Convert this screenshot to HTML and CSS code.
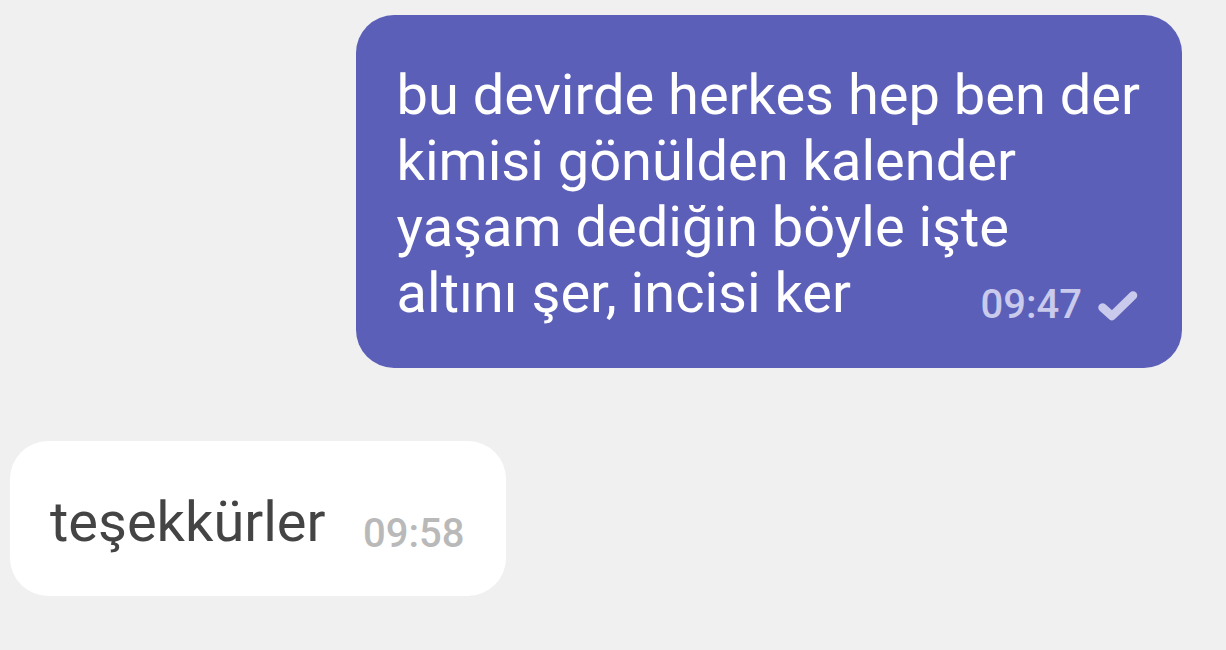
FILE: index.html
```html
<!doctype html>
<html lang="tr">
<head>
    <meta charset="UTF-8">
    <link rel="stylesheet" href="styles.css">
    <title>Sohbet</title>
</head>
<body>
    <div class="chat">
        <!-- outgoing -->
        <div class="row row-out">
            <div class="bubble bubble-out">
                <p class="text">bu devirde herkes hep ben der<br>kimisi gönülden kalender<br>yaşam dediğin böyle işte<br>altını şer, incisi ker<span class="spacer"></span></p>
                <span class="meta">
                    <span class="time">09:47</span>
                    <svg class="check" viewBox="0 0 42 34" width="42" height="34">
                        <path d="M5.5 18.5 L15 27 L36 6.5" fill="none" stroke="currentColor" stroke-width="8.5" stroke-linecap="round" stroke-linejoin="round"/>
                    </svg>
                </span>
            </div>
        </div>

        <!-- incoming -->
        <div class="row row-in">
            <div class="bubble bubble-in">
                <p class="text">teşekkürler<span class="spacer spacer-short"></span></p>
                <span class="meta">
                    <span class="time">09:58</span>
                </span>
            </div>
        </div>
    </div>
</body>
</html>
```

FILE: styles.css
```css
html, body {
    margin: 0;
    padding: 0;
}

body {
    background-color: #f0f0f0;
    font-family: Roboto, "Noto Sans", sans-serif;
    width: 1226px;
    height: 650px;
    overflow: hidden;
}

.chat {
    display: flex;
    flex-direction: column;
    gap: 73px;
    padding: 15px 44px 0 10px;
}

.row {
    display: flex;
}

.row-out {
    justify-content: flex-end;
}

.row-in {
    justify-content: flex-start;
}

.bubble {
    position: relative;
    border-radius: 38px;
    padding: 47px 41px 42px 41px;
}

.bubble-out {
    background-color: #5b5fb8;
    color: #ffffff;
}

.bubble-in {
    background-color: #ffffff;
    color: #444444;
    padding: 48px 40px 41px 40px;
}

.text {
    margin: 0;
    font-size: 56px;
    line-height: 66px;
    white-space: nowrap;
}

.spacer {
    display: inline-block;
    width: 290px;
}

.spacer-short {
    width: 140px;
}

.meta {
    position: absolute;
    right: 43px;
    bottom: 43px;
    display: flex;
    align-items: center;
    gap: 15px;
    font-size: 40px;
    font-weight: 500;
    line-height: 40px;
}

.bubble-out .meta {
    color: #c9caec;
}

.bubble-in .meta {
    right: 41px;
    bottom: 42px;
    color: #b9b9b9;
}

.check {
    display: block;
    margin-top: 2px;
}
```
